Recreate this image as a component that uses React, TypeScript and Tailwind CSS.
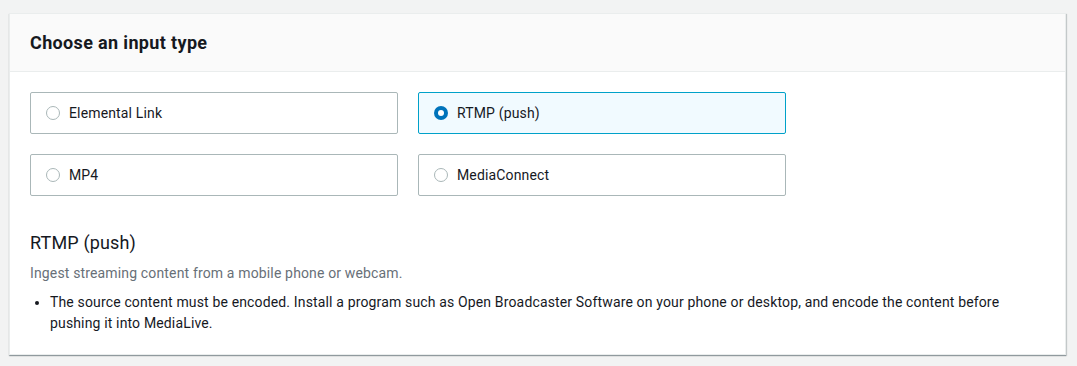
import React from 'react';

const options = [
  { label: 'Elemental Link', selected: false },
  { label: 'RTMP (push)', selected: true },
  { label: 'MP4', selected: false },
  { label: 'MediaConnect', selected: false },
];

function Radio({ selected }: { selected: boolean }) {
  if (selected) {
    return (
      <span className="w-[14px] h-[14px] rounded-full bg-[#0073bb] flex items-center justify-center shrink-0">
        <span className="w-[6px] h-[6px] rounded-full bg-white"></span>
      </span>
    );
  }
  return <span className="w-[14px] h-[14px] rounded-full border-[1.5px] border-[#aab7b8] bg-white shrink-0"></span>;
}

export default function App() {
  return (
    <div className="min-h-[366px] bg-[#f2f3f3] pt-[13px] pl-[9px] pr-[11px] font-['Roboto',sans-serif] text-[#16191f] tracking-[0.15px]">
      <div className="bg-white border border-[#eaeded] shadow-[0_1px_1px_0_rgba(0,28,36,0.3),1px_1px_1px_0_rgba(0,28,36,0.15)]">
        {/* Header */}
        <div className="bg-[#fafafa] border-b border-[#eaeded] h-[58px] px-[20px] flex items-center">
          <h2 className="text-[18px] font-bold leading-[22px] tracking-[0.35px]">Choose an input type</h2>
        </div>

        <div className="px-[20px] pt-[20px] pb-[20px]">
          {/* Options */}
          <div className="grid grid-cols-[368px_368px] gap-x-[20px] gap-y-[20px]">
            {options.map((o) => (
              <div
                key={o.label}
                className={
                  o.selected
                    ? 'h-[42px] rounded-[2px] border border-[#00a1c9] bg-[#f1faff] flex items-center gap-[9px] px-[15px] text-[14px]'
                    : 'h-[42px] rounded-[2px] border border-[#aab7b8] bg-white flex items-center gap-[9px] px-[15px] text-[14px]'
                }
              >
                <Radio selected={o.selected} />
                <span>{o.label}</span>
              </div>
            ))}
          </div>

          {/* Details */}
          <h3 className="mt-[36px] text-[18px] leading-[22px]">RTMP (push)</h3>
          <p className="mt-[9px] text-[14px] leading-[20px] text-[#687078]">
            Ingest streaming content from a mobile phone or webcam.
          </p>
          <ul className="mt-[9px] list-disc pl-[20px] pr-[30px] text-[14px] leading-[21px]">
            <li>
              The source content must be encoded. Install a program such as Open Broadcaster Software on your phone or
              desktop, and encode the content before pushing it into MediaLive.
            </li>
          </ul>
        </div>
      </div>
    </div>
  );
}
